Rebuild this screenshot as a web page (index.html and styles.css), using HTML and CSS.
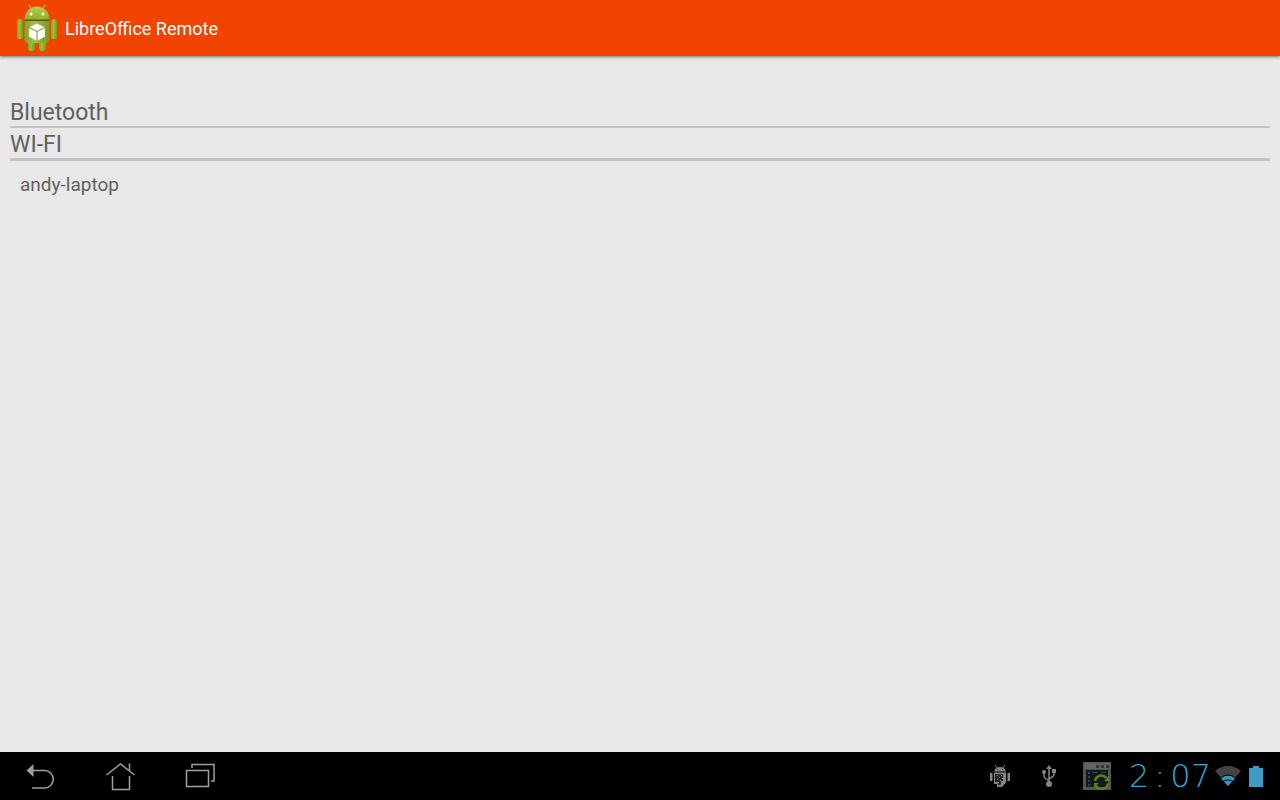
FILE: index.html
```html
<!DOCTYPE html>
<html lang="en">
<head>
    <meta charset="utf-8">
    <title>LibreOffice Remote</title>
    <link rel="stylesheet" href="styles.css">
</head>
<body>
    <header class="action-bar">
        <svg class="app-icon" viewBox="0 0 48 48" aria-hidden="true">
            <defs>
                <linearGradient id="green" x1="0" x2="1" y1="0" y2="0">
                    <stop offset="0" stop-color="#85a428"/>
                    <stop offset=".4" stop-color="#9fc03a"/>
                    <stop offset="1" stop-color="#78981f"/>
                </linearGradient>
                <linearGradient id="head" x1="0" x2="0" y1="0" y2="1">
                    <stop offset="0" stop-color="#b5d24c"/>
                    <stop offset="1" stop-color="#8eb028"/>
                </linearGradient>
            </defs>
            <path d="M17 1l3 5M33 1l-3 5" stroke="#a4b83a" stroke-width="1.4" stroke-linecap="round"/>
            <rect x="16" y="35" width="7" height="12" rx="3" fill="url(#green)"/>
            <rect x="27" y="35" width="7" height="12" rx="3" fill="url(#green)"/>
            <rect x="5" y="15" width="6" height="20" rx="2.5" fill="url(#green)"/>
            <rect x="39" y="15" width="6" height="20" rx="2.5" fill="url(#green)"/>
            <path d="M12.500 15.500C12.500 8 18 2.500 25 2.500S37.500 8 37.500 15.500z" fill="url(#head)"/>
            <path d="M12.500 17h25v18q0 4-4 4h-17q-4 0-4-4z" fill="url(#green)"/>
            <path d="M12.500 16.300h25" stroke="#405812"/>
            <circle cx="19" cy="10" r="1.500" fill="#fff"/>
            <circle cx="31" cy="10" r="1.500" fill="#fff"/>
            <path d="M25 19.500l8 4v9l-8 4.500-8-4.500v-9z" fill="#fff"/>
            <path d="M17 23.500l8 4 8-4M25 27.500V37" fill="none" stroke="#728d2c" stroke-width="1"/>
        </svg>
        <h1>LibreOffice Remote</h1>
    </header>

    <main>
        <h2>Bluetooth</h2>
        <h2 class="filled">WI-FI</h2>
        <ul class="servers">
            <li><button type="button">andy-laptop</button></li>
        </ul>
    </main>

    <footer class="system-bar">
        <nav>
            <button type="button" aria-label="Back">
                <svg width="32" height="32" viewBox="0 0 32 32" fill="none" stroke="#a09fa0" stroke-width="1.500">
                    <path d="M8 10.500h12.500a8.750 8.750 0 0 1 0 17.500H8"/>
                    <path d="M2.500 10.500l7-6.500v13z" fill="#a09fa0" stroke="none"/>
                </svg>
            </button>
            <button type="button" aria-label="Home">
                <svg width="32" height="32" viewBox="0 0 32 32" fill="none" stroke="#a09fa0" stroke-width="1.500">
                    <path d="M2.500 15L16.500 4l14 11M25.500 11V3.500M8.500 16v13.500h17V16"/>
                </svg>
            </button>
            <button type="button" aria-label="Recent apps">
                <svg width="32" height="32" viewBox="0 0 32 32" fill="none" stroke="#a09fa0" stroke-width="1.500">
                    <path d="M2.500 10.500h22v16h-22zM8 8V4.500h22v16.500H27"/>
                </svg>
            </button>
        </nav>
        <div class="status">
            <svg width="22" height="24" viewBox="0 0 22 24" fill="#858585" aria-label="USB debugging">
                <path d="M5 7.500q1-4.500 6-4.500t6 4.500zM1 9h2.500v8H1zM18.500 9H21v8h-2.500zM5 8.500h12v10l-4 4.500H8v-3H5z"/>
                <path d="M6 1l2 3M16 1l-2 3" stroke="#858585"/>
                <path d="M8 5h1v1H8zM13 5h1v1h-1zM6 10h8v8l-3 3H9v-3H6z" fill="#252525"/>
                <path d="M8 11h1v1H8zM12 11h1v1h-1zM10 13h1v1h-1zM13 14h1v1h-1zM8 15h1v1H8zM11 16h1v1h-1zM9 18h1v1H9zM12 17h4l-4 4z"/>
            </svg>
            <svg class="usb" width="16" height="24" viewBox="0 0 16 24" fill="none" stroke="#858585" stroke-width="1.500" aria-label="USB connected">
                <path d="M8 4v15M3 8v4q0 1 1 2l4 3M8 15l4-2.500q1-1 1-2V7"/>
                <path d="M8 1l3 4H5zM11 5h4v4h-4z" fill="#858585" stroke="none"/>
                <circle cx="3" cy="8" r="2" fill="#858585" stroke="none"/>
                <circle cx="8" cy="20" r="3" fill="#858585" stroke="none"/>
            </svg>
            <svg width="28" height="28" viewBox="0 0 28 28" aria-label="Sync">
                <path d="M0 0h28v28H0z" fill="#555"/>
                <path d="M1 1h26v6H1z" fill="#626262"/>
                <path d="M3 8h22v17H3z" fill="#11171b"/>
                <path d="M13 3h3v3h-3zM18 3h3v3h-3zM23 3h3v3h-3z" fill="#353535"/>
                <path d="M5 10h2v2H5zM5 14h2v2H5zM5 18h2v2H5zM5 22h2v2H5zM9 10h6v1H9zM18 10h5v1h-5z" fill="#35434b"/>
                <path d="M12 19a6.500 6.500 0 0 1 11.500-3M25 21.500a6.500 6.500 0 0 1-12 2.500" fill="none" stroke="#588410" stroke-width="2.500"/>
                <path d="M26 14v5h-5zM11 26v-5h5z" fill="#588410"/>
            </svg>
            <time datetime="14:07"><span>2</span><span>:</span><span>07</span></time>
            <svg width="26" height="20" viewBox="0 0 26 20" aria-label="Wi-Fi signal">
                <path d="M13 20L0 5Q5.500 0 13 0t13 5z" fill="#444"/>
                <path d="M13 20L6 12.500q3-3 7-3t7 3z" fill="#3399c2"/>
                <path d="M5.500 12q3.500-3 7.500-3t7.500 3M8 15.500q2-1.500 5-1.500t5 1.500" fill="none" stroke="#000"/>
            </svg>
            <svg class="battery" width="14" height="21" viewBox="0 0 14 21" aria-label="Battery">
                <path d="M4 0h6v2h4v19H0V2h4z" fill="#409cc3"/>
            </svg>
        </div>
    </footer>
</body>
</html>
```
FILE: styles.css
```css
body {
    margin: 0;
    min-height: 100vh;
    display: flex;
    flex-direction: column;
    background-color: #e8e8e8;
    color: #606060;
    font-family: Roboto, "Liberation Sans", sans-serif;
}
button {
    border: none;
    background: none;
    color: inherit;
    font: inherit;
    padding: 0;
    cursor: pointer;
}
.action-bar {
    display: flex;
    align-items: center;
    gap: 5px;
    height: 56px;
    padding: 0 12px;
    background-color: #f04400;
    color: #fff;
    box-shadow: 0 1px 3px rgba(0, 0, 0, 0.5);
}
.app-icon {
    width: 48px;
    height: 48px;
}
h1 {
    margin: 0;
    font-size: 18px;
    font-weight: 400;
}
main {
    flex: 1;
    padding: 44px 10px 0;
}
h2 {
    margin: 0;
    border-bottom: 2px solid #c3c3c3;
    font-size: 23px;
    font-weight: 400;
    line-height: 26px;
}
h2.filled {
    padding-top: 4px;
    border-bottom-width: 3px;
}
.servers {
    list-style: none;
    margin: 0;
    padding: 0;
}
.servers button {
    width: 100%;
    padding: 12px 10px;
    font-size: 19px;
    line-height: 24px;
    text-align: left;
}
.system-bar {
    display: flex;
    justify-content: space-between;
    align-items: center;
    height: 48px;
    background-color: #000;
}
nav {
    display: flex;
}
nav button {
    width: 80px;
    height: 48px;
}
nav svg {
    display: block;
    margin: 0 auto;
}
.status {
    display: flex;
    align-items: center;
    padding-right: 17px;
}
.usb {
    margin: 0 26px 0 30px;
}
time {
    display: flex;
    justify-content: space-between;
    width: 82px;
    margin: 0 4px 0 18px;
    color: #33a5d3;
    font-family: "DejaVu Sans", sans-serif;
    font-size: 32px;
    font-weight: 200;
    line-height: 48px;
}
.battery {
    margin-left: 8px;
}
```
